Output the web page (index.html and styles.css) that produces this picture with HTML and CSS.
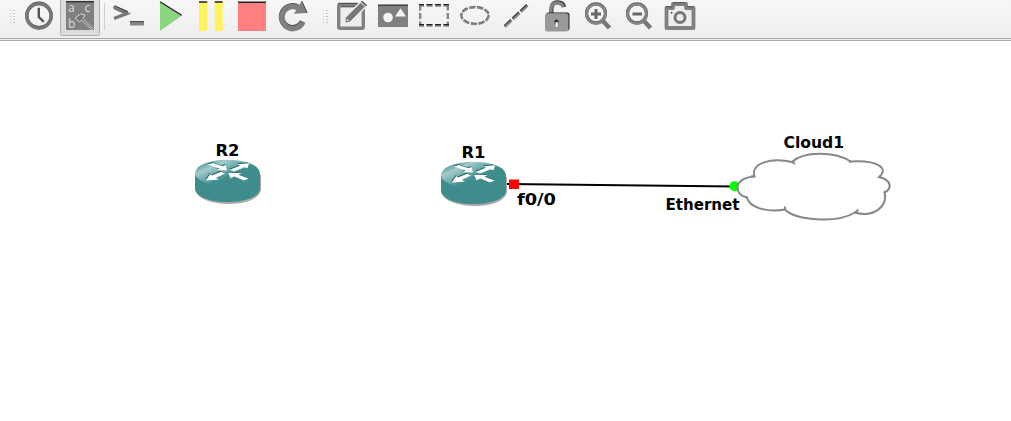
FILE: index.html
```
<!DOCTYPE html>
<html lang="en">
<head>
<meta charset="utf-8">
<title>Network topology</title>
<link rel="stylesheet" href="styles.css">
</head>
<body>
<header class="toolbar">
  <span class="handle"></span>
  <svg class="tool" viewBox="19 0 41 38"><g fill="none"><circle cx="39" cy="15.400" r="12.200" stroke="#444" stroke-width="3.200"/><circle cx="39" cy="16" r="12.200" stroke="#777" stroke-width="3.400"/><path d="M38.800 7.700V17l5 4.800" stroke="#555" stroke-width="2.400"/></g></svg>
  <svg class="tool" viewBox="60 0 41 38"><rect x="60.500" y="-4" width="39" height="39.500" rx="2" fill="#dcdcdc" stroke="#ababab"/><path fill="#808080" d="M66 2h28v28H66z"/><path fill="#333" d="M66 1h28v1.400H66z"/><g class="letters"><text x="68" y="12">a</text><text x="84.500" y="12">c</text><text x="68" y="27.500">b</text></g><path d="M75 18l5.500-4 4.500 1-2 3.500 10 10-1.300 1.200L81.500 20l-2 2z" fill="#777" stroke="#ddd" stroke-width=".9"/></svg>
  <span class="separator"></span>
  <svg class="tool" viewBox="109 0 41 38"><g fill="none"><path d="M114 6.500l13.500 6" stroke="#333" stroke-width="3"/><path d="M114 7.500l13 6-13 5" stroke="#777" stroke-width="3.200"/><path d="M130 23.500h14" stroke="#858585" stroke-width="4"/><path d="M130 21.600h14" stroke="#444"/></g></svg>
  <svg class="tool" viewBox="150 0 41 38"><path d="M160 2l22 13.500L160 31z" fill="#8cd681"/><path d="M160 1.700l21.700 13.600" stroke="#222" stroke-width="1.300"/></svg>
  <svg class="tool" viewBox="191 0 41 38"><path d="M199 2h8.300v29H199zM214.700 2h8v29h-8z" fill="#fff35b"/><path d="M199 1.300h8.300v1.500H199zM214.700 1.300h8v1.500h-8z" fill="#222"/></svg>
  <svg class="tool" viewBox="232 0 41 38"><path d="M238 2h28v29H238z" fill="#ff8080"/><path d="M238 1.500h28v1.500H238z" fill="#222"/></svg>
  <svg class="tool" viewBox="273 0 41 38"><g fill="none"><path d="M302.500 21.500A11 11 0 1 1 298.500 7.500" stroke="#444" stroke-width="5.500"/><path d="M302.700 22.300A11 11 0 1 1 298.500 8.200" stroke="#808080" stroke-width="5.500"/></g><path d="M301.700 1l5.500 12-13.200.8z" fill="#808080"/><path d="M301.700 1l5.500 12" stroke="#444"/></svg>
  <span class="handle"></span>
  <svg class="tool" viewBox="332 0 41 38"><rect x="338.700" y="4.700" width="24.600" height="23.600" rx="1.500" fill="#ededed" stroke="#808080" stroke-width="3.400"/><path d="M338 3.300h20M340.500 6.800h17" stroke="#444"/><path d="M345 23v-5.500L360.500 2l5.500 4.500-15.500 15.500z" fill="#777" stroke="#eee" stroke-width="1.500"/><path d="M361.500 1.300l5 4.500" stroke="#444" stroke-width="1.500"/><path d="M346 22l1-4 3 3z" fill="#ddd" stroke="#777"/></svg>
  <svg class="tool" viewBox="373 0 41 38"><path d="M378 5h30v22h-30z" fill="#808080"/><path d="M378 4.500h30v1.300h-30z" fill="#333"/><circle cx="388" cy="17.500" r="4.800" fill="#f5f5f5"/><path d="M395 16.500l5.500-8.300 5.500 8.300z" fill="#f5f5f5"/></svg>
  <svg class="tool" viewBox="414 0 41 38"><g fill="none" stroke="#888" stroke-width="2.400"><path d="M419 5.500h5m2.500 0h6m2.500 0h6m2.500 0h5.500M419 25.500h5m2.500 0h6m2.500 0h6m2.500 0h5.500M420.200 4.500v6m0 2.500v6m0 2.500v5M447.800 4.500v6m0 2.500v6m0 2.500v5"/><path stroke="#222" stroke-width="1.200" d="M419 4.700h5m2.500 0h6m2.500 0h6m2.500 0h5.500M419 24.700h5m2.500 0h6m2.500 0h6m2.500 0h5.500"/></g></svg>
  <svg class="tool" viewBox="455 0 41 38"><g fill="none" stroke-dasharray="6 1.800"><ellipse cx="475" cy="15.300" rx="13.700" ry="8.400" stroke="#444" stroke-width="2"/><ellipse cx="475" cy="15.800" rx="13.700" ry="8.400" stroke="#858585" stroke-width="2"/></g></svg>
  <svg class="tool" viewBox="496 0 41 38"><g fill="none" stroke-dasharray="9 2"><path d="M527 4.800L504.500 26" stroke="#333" stroke-width="2.300"/><path d="M527.700 5.800L505 27" stroke="#888" stroke-width="2.200"/></g></svg>
  <svg class="tool" viewBox="537 0 41 38"><path d="M551.500 15V9q0-6.700 6.200-6.700 5.300 0 6.500 4.700" fill="none" stroke="#333" stroke-width="4"/><path d="M551 15V9.500q0-6.500 6.200-6.500 4.700 0 6 4" fill="none" stroke="#858585" stroke-width="3.300"/><rect x="546" y="12.600" width="23.500" height="18" rx="2.500" fill="#222"/><rect x="545" y="13.300" width="23.500" height="18.200" rx="2.500" fill="#999"/><circle cx="556.500" cy="21.600" r="2.200" fill="#333"/><path d="M556.700 22v5" stroke="#eee" stroke-width="2"/></svg>
  <svg class="tool" viewBox="578 0 41 38"><g fill="none"><circle cx="596" cy="13.300" r="9.500" stroke="#555" stroke-width="3.200"/><circle cx="596" cy="13.900" r="9.500" stroke="#858585" stroke-width="2.800"/><path d="M603 21l6.500 7" stroke="#777" stroke-width="4.500"/><path d="M591 14h10M596 9v10" stroke="#666" stroke-width="3"/></g></svg>
  <svg class="tool" viewBox="619 0 41 38"><g fill="none"><circle cx="637" cy="13.300" r="9.500" stroke="#555" stroke-width="3.200"/><circle cx="637" cy="13.900" r="9.500" stroke="#858585" stroke-width="2.800"/><path d="M644 21l6.500 7" stroke="#777" stroke-width="4.500"/><path d="M632.500 14h9.500" stroke="#666" stroke-width="3"/></g></svg>
  <svg class="tool" viewBox="660 0 41 38"><path d="M666.500 8h6.500V4h13v4h7.500v20h-27z" fill="#ededed" stroke="#808080" stroke-width="3.800" stroke-linejoin="round"/><path d="M673 2.700h13M665.500 6.700h6.500M687 6.700h6.500" stroke="#555"/><circle cx="680" cy="17.500" r="5" fill="none" stroke="#777" stroke-width="3"/><circle cx="671.500" cy="12.700" r="1" fill="#555"/></svg>
</header>
<main class="workspace">
  <svg class="topology" viewBox="0 41 1011 380">
    <defs>
      <linearGradient id="lid" x1="0" y1=".2" x2=".5" y2=".65"><stop offset="0" stop-color="#3e9292"/><stop offset=".35" stop-color="#a5cbcb"/><stop offset="1" stop-color="#3f8d8d"/></linearGradient>
      <g id="router">
        <path d="M1 14v17c2 8 16 13 33 13s30-5 32-14V15z" fill="#aaa"/>
        <path d="M0 13v16c0 7 14 13 32.500 13s32.500-6 32.500-13V13z" fill="#3e8d8c"/>
        <ellipse cx="32.500" cy="13" rx="32.500" ry="13.300" fill="url(#lid)"/>
        <g fill="#266b6c" transform="translate(-.6 -.9)"><path id="arrows" d="M12.700 4.500L18 3l9.300 3.300 3.200-1.300L32 10.500l-10-.6 2.500-1.500zM34.800 9.700L45 5.800 42.500 4.200 54 3.300l-1.500 5-3-1L39 11.600zM30 13.600L21 17.700l2.800 1.800-13 .9 4.400-6.400 1.800 1.500 9.200-3.800zM33 12.800l13.500.2-3 1.700 10 3.900-4.500 1.900-9.500-4-4 1.700z"/></g>
        <use href="#arrows" fill="#fff"/>
      </g>
    </defs>
    <path d="M506 184L735 186.500" stroke="#000" stroke-width="2"/>
    <path d="M509 179.500h10v9.500h-10z" fill="red"/>
    <circle cx="734.500" cy="186.300" r="5" fill="#0f0"/>
    <use href="#router" x="195" y="160"/>
    <use href="#router" x="441" y="162"/>
    <path class="cloud" d="M754.500 176.500C744 177 737.500 182 737.500 187.500C737.500 193 742 196.500 747 197.500C749 207 766 213 785 209.500C795 220 836 224 855 212.500C874 218 888 206 884.500 192.500C892 189 892 180 879 177C889 169 879 160 851 161.500C835 151 803 151 792 162C770 157 750 164 754.500 176.500Z"/>
    <path class="cloud" d="M792 162l3 1.800M754.500 176.500l-3.500-.3M747 197.500l-2-.7M785 209.500v-3M855 212.500l3.500-3M884.500 192.500l1-1.500M879 177l2-1.300M851 161.500l-2 .5"/>
    <g class="labels">
      <text x="215.500" y="156" textLength="24" lengthAdjust="spacingAndGlyphs">R2</text>
      <text x="461.500" y="158" textLength="24" lengthAdjust="spacingAndGlyphs">R1</text>
      <text x="517" y="205" textLength="39" lengthAdjust="spacingAndGlyphs">f0/0</text>
      <text x="665.500" y="210" textLength="74" lengthAdjust="spacingAndGlyphs">Ethernet</text>
      <text x="783.500" y="148" textLength="60.500" lengthAdjust="spacingAndGlyphs">Cloud1</text>
    </g>
  </svg>
</main>
</body>
</html>
```
FILE: styles.css
```
body {
  margin: 0;
  background: #fff;
  overflow: hidden;
}
.toolbar {
  display: flex;
  box-sizing: border-box;
  height: 41px;
  padding-left: 1px;
  background: linear-gradient(#f7f7f7, #ededed);
  border-bottom: 1px solid #aaa;
  box-shadow: inset 0 -1px #efefef, inset 0 -2px #aaa;
}
.tool {
  flex: none;
  width: 41px;
  height: 38px;
}
.handle {
  flex: none;
  width: 18px;
  height: 17px;
  margin-top: 8px;
  background: radial-gradient(circle, #c5c5c5 .7px, transparent .9px) center / 4px 3px;
  background-clip: content-box;
  box-sizing: border-box;
  padding: 0 4px 0 9px;
}
.separator {
  flex: none;
  box-sizing: border-box;
  width: 8px;
  height: 27px;
  margin-top: 3px;
  background: linear-gradient(#cfcfcf, #cfcfcf) 3px 0 / 1px 100% no-repeat;
}
.letters {
  font: 12px "Open Sans", sans-serif;
  fill: #ddd;
}
.workspace {
  height: 380px;
}
.topology {
  display: block;
  width: 1011px;
  height: 380px;
}
.cloud {
  fill: #fff;
  stroke: #858888;
  stroke-width: 2;
}
.labels {
  font: bold 16px "DejaVu Sans Condensed", "DejaVu Sans", sans-serif;
  font-stretch: condensed;
  fill: #000;
}
```
